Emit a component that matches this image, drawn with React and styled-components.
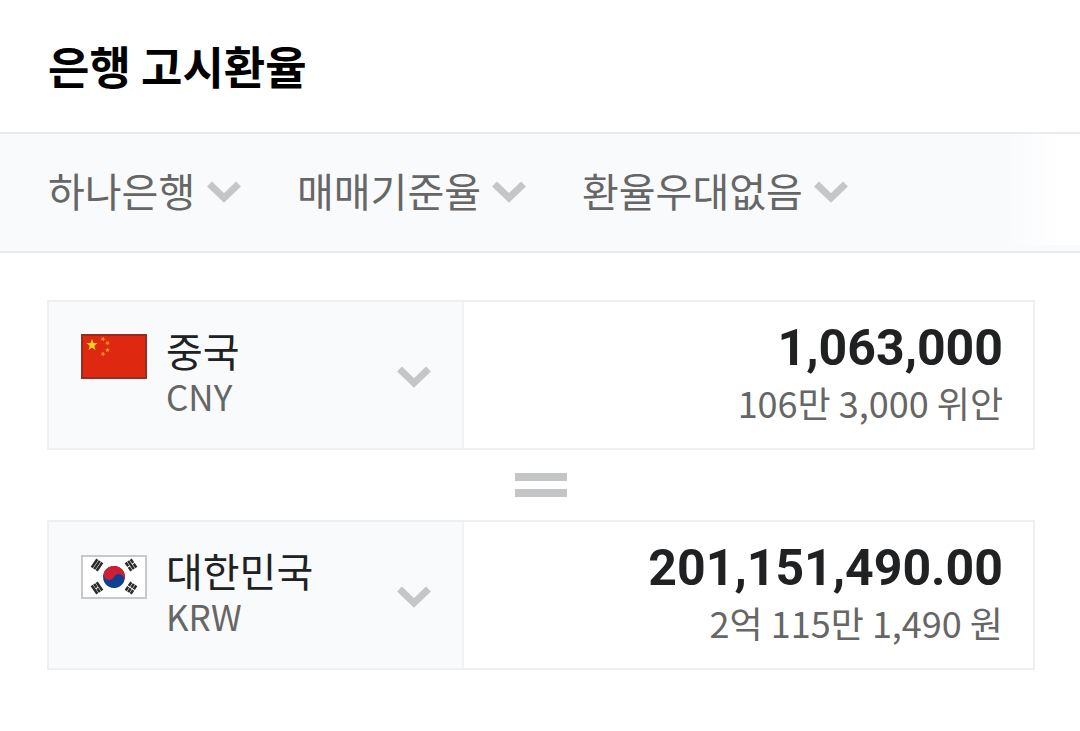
import React, { useState } from 'react';
import styled, { createGlobalStyle } from 'styled-components';

const GlobalStyle = createGlobalStyle`
  * {
    box-sizing: border-box;
  }

  body {
    margin: 0;
    background-color: #fff;
    color: #202123;
    font-family: 'Noto Sans CJK KR', sans-serif;
  }

  button, input, select {
    margin: 0;
    padding: 0;
    border: 0;
    border-radius: 0;
    background: none;
    color: inherit;
    font: inherit;
  }
`;

const Header = styled.header`
  padding: 34px 48px;
`;

const Title = styled.h2`
  margin: 0;
  color: #000;
  font-size: 45px;
  font-weight: 700;
  line-height: 64px;
`;

const FilterBar = styled.div`
  position: relative;
  display: flex;
  gap: 55px;
  padding: 28px 48px 29px;
  border-top: 2px solid #e9ebed;
  border-bottom: 2px solid #e9ebed;
  background-color: #f9fafc;

  &::after {
    content: '';
    position: absolute;
    top: 0;
    right: 0;
    bottom: 6px;
    width: 72px;
    background: linear-gradient(to right, rgba(255, 255, 255, 0), #fff 70%);
    pointer-events: none;
  }
`;

const Filter = styled.label`
  display: flex;
  align-items: center;
  gap: 10px;
`;

const FilterSelect = styled.select`
  appearance: none;
  height: 60px;
  padding-bottom: 4px;
  color: #666;
  font-size: 40px;
  line-height: 56px;
  cursor: pointer;
`;

const ChevronIcon = styled.svg`
  flex: none;
  width: 36px;
  height: 24px;
  fill: none;
  stroke: #c5c6c8;
  stroke-width: 7;
`;

const Converter = styled.main`
  padding: 47px 45px 61px 47px;
`;

const Card = styled.div`
  display: grid;
  grid-template-columns: 422fr 578fr;
  border: 2px solid #eeeff1;
`;

const CountryButton = styled.button`
  display: flex;
  align-items: center;
  padding: 24px 30px 20px 32px;
  border-right: 2px solid #f2f3f5;
  background-color: #f9fafc;
  text-align: left;
  cursor: pointer;
`;

const Flag = styled.svg`
  flex: none;
  align-self: flex-start;
  width: 66px;
  height: 45px;
  margin: 8px 19px 0 0;
`;

const CountryText = styled.span`
  display: flex;
  flex: 1;
  flex-direction: column;
  align-self: flex-start;
`;

const CountryName = styled.span`
  font-size: 40px;
  line-height: 48px;
`;

const CurrencyCode = styled.span`
  color: #666;
  font-size: 35px;
  line-height: 44px;
`;

const Amount = styled.div`
  display: flex;
  flex-direction: column;
  min-width: 0;
  padding: 16px 30px 22px 16px;
`;

const AmountInput = styled.input`
  width: 100%;
  height: 60px;
  font-family: Roboto, sans-serif;
  font-size: 50px;
  font-weight: 700;
  text-align: right;
`;

const AmountText = styled.span`
  color: #666;
  font-size: 36px;
  line-height: 48px;
  text-align: right;
`;

const EqualSign = styled.div`
  width: 52px;
  height: 24px;
  margin: 23px auto;
  border-top: 8px solid #c4c5c7;
  border-bottom: 8px solid #c4c5c7;
`;

const Chevron = () => (
  <ChevronIcon viewBox="0 0 36 24" aria-hidden="true">
    <path d="M3.5 4 L18 18 L32.5 4" />
  </ChevronIcon>
);

const STAR = '0,-6 1.4,-1.9 5.7,-1.9 2.3,0.8 3.5,4.9 0,2.4 -3.5,4.9 -2.3,0.8 -5.7,-1.9 -1.4,-1.9';

const ChinaFlag = () => (
  <Flag viewBox="0 0 66 45" aria-hidden="true">
    <rect x="1" y="1" width="64" height="43" fill="#de2910" stroke="#972d20" strokeWidth="2" />
    <polygon points={STAR} transform="translate(11 11)" fill="#ffd51c" />
    <g fill="#f7992a">
      <polygon points={STAR} transform="translate(22 5) rotate(25) scale(0.45)" />
      <polygon points={STAR} transform="translate(26.5 9) rotate(45) scale(0.45)" />
      <polygon points={STAR} transform="translate(26.5 16) scale(0.45)" />
      <polygon points={STAR} transform="translate(22 20) rotate(20) scale(0.45)" />
    </g>
  </Flag>
);

// each trigram is three bars, a broken bar gets a small gap in the middle
const TRIGRAMS = [
  { x: 16, y: 11, angle: -56, broken: [false, false, false] },
  { x: 50, y: 11, angle: 56, broken: [true, false, true] },
  { x: 16, y: 34, angle: 56, broken: [false, true, false] },
  { x: 50, y: 34, angle: -56, broken: [true, true, true] },
];

const KoreaFlag = () => (
  <Flag viewBox="0 0 66 45" aria-hidden="true">
    <rect x="1" y="2" width="64" height="42" fill="#fff" stroke="#c9c9c9" strokeWidth="2" />
    <g transform="translate(33 23) rotate(28)">
      <circle r="11" fill="#0f3f91" />
      <path d="M-11 0 A11 11 0 0 1 11 0 A5.5 5.5 0 0 0 0 0 A5.5 5.5 0 0 1 -11 0 Z" fill="#cf1f35" />
    </g>
    {TRIGRAMS.map(({ x, y, angle, broken }) => (
      <g key={`${x}-${y}`} transform={`translate(${x} ${y}) rotate(${angle})`} stroke="#2a2a2a" strokeWidth="2.5">
        {broken.map((isBroken, i) => (
          <path key={i} d={`M-5 ${(i - 1) * 3} H5`} strokeDasharray={isBroken ? '4.5 1' : 'none'} />
        ))}
      </g>
    ))}
  </Flag>
);

const filters = [
  { id: 'bank', label: '은행', value: '하나은행' },
  { id: 'rate', label: '환율 기준', value: '매매기준율' },
  { id: 'discount', label: '환율 우대', value: '환율우대없음' },
];

const CurrencyCard = ({ flag, country, code, defaultAmount, amountText }) => {
  const [amount, setAmount] = useState(defaultAmount);

  return (
    <Card>
      <CountryButton type="button" aria-haspopup="listbox">
        {flag}
        <CountryText>
          <CountryName>{country}</CountryName>
          <CurrencyCode>{code}</CurrencyCode>
        </CountryText>
        <Chevron />
      </CountryButton>
      <Amount>
        <AmountInput
          type="text"
          inputMode="decimal"
          aria-label={`${country} ${code}`}
          value={amount}
          onChange={(e) => setAmount(e.target.value)}
        />
        <AmountText>{amountText}</AmountText>
      </Amount>
    </Card>
  );
};

const App = () => {
  return (
    <>
      <GlobalStyle />
      <Header>
        <Title>은행 고시환율</Title>
      </Header>
      <FilterBar>
        {filters.map(({ id, label, value }) => (
          <Filter key={id} htmlFor={id}>
            <FilterSelect id={id} aria-label={label}>
              <option>{value}</option>
            </FilterSelect>
            <Chevron />
          </Filter>
        ))}
      </FilterBar>
      <Converter>
        <CurrencyCard
          flag={<ChinaFlag />}
          country="중국"
          code="CNY"
          defaultAmount="1,063,000"
          amountText="106만 3,000 위안"
        />
        <EqualSign role="img" aria-label="=" />
        <CurrencyCard
          flag={<KoreaFlag />}
          country="대한민국"
          code="KRW"
          defaultAmount="201,151,490.00"
          amountText="2억 115만 1,490 원"
        />
      </Converter>
    </>
  );
};

export default App;
